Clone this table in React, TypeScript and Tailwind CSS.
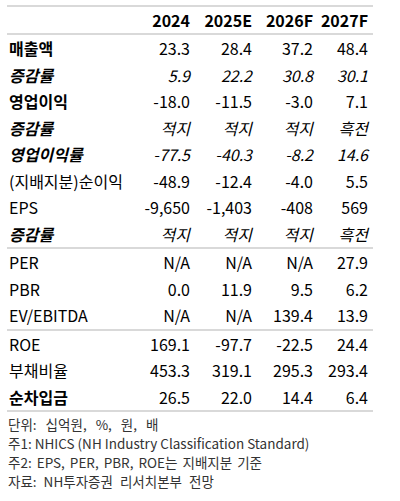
const rows = [
  { label: "매출액", values: ["23.3", "28.4", "37.2", "48.4"], bold: true },
  { label: "증감률", values: ["5.9", "22.2", "30.8", "30.1"], italic: true },
  { label: "영업이익", values: ["-18.0", "-11.5", "-3.0", "7.1"], bold: true },
  { label: "증감률", values: ["적지", "적지", "적지", "흑전"], italic: true },
  { label: "영업이익률", values: ["-77.5", "-40.3", "-8.2", "14.6"], italic: true },
  { label: "(지배지분)순이익", values: ["-48.9", "-12.4", "-4.0", "5.5"] },
  { label: "EPS", values: ["-9,650", "-1,403", "-408", "569"] },
  { label: "증감률", values: ["적지", "적지", "적지", "흑전"], italic: true },
];

const valuation = [
  { label: "PER", values: ["N/A", "N/A", "N/A", "27.9"] },
  { label: "PBR", values: ["0.0", "11.9", "9.5", "6.2"] },
  { label: "EV/EBITDA", values: ["N/A", "N/A", "139.4", "13.9"] },
];

const balance = [
  { label: "ROE", values: ["169.1", "-97.7", "-22.5", "24.4"] },
  { label: "부채비율", values: ["453.3", "319.1", "295.3", "293.4"] },
  { label: "순차입금", values: ["26.5", "22.0", "14.4", "6.4"], bold: true },
];

type Row = { label: string; values: string[]; bold?: boolean; italic?: boolean };

const cols = ["w-[65px]", "w-[62px]", "w-[61px]", "w-[60px] pr-[5px]"];

const TableRow = ({ row }: { row: Row }) => (
  <div className={`flex items-center h-[26.5px] ${row.italic ? "italic" : ""}`}>
    <div className={`w-[118px] pl-[2px] whitespace-nowrap ${row.bold || row.italic ? "font-bold" : ""}`}>
      {row.label}
    </div>
    {row.values.map((v, i) => (
      <div key={i} className={`${cols[i]} text-right`}>
        {v}
      </div>
    ))}
  </div>
);

const Divider = () => <div className="h-[2px] bg-[#d9d9d9]" />;

const App = () => {
  return (
    <div
      className="w-[400px] h-[501px] bg-white text-black pt-[5px] px-[7px]"
      style={{ fontFamily: '"Noto Sans CJK KR", "Noto Sans", sans-serif' }}
    >
      <div className="w-[366px] text-[16px] leading-none">
        <Divider />
        <div className="flex items-center h-[26px] font-bold">
          <div className="w-[118px]" />
          <div className="w-[65px] text-right">2024</div>
          <div className="w-[62px] text-right">2025E</div>
          <div className="w-[61px] text-right">2026F</div>
          <div className="w-[60px] pr-[5px] text-right">2027F</div>
        </div>
        <Divider />
        {rows.map((r, i) => (
          <TableRow key={i} row={r} />
        ))}
        <Divider />
        {valuation.map((r, i) => (
          <TableRow key={i} row={r} />
        ))}
        <Divider />
        {balance.map((r, i) => (
          <TableRow key={i} row={r} />
        ))}
        <Divider />
      </div>
      <div className="mt-[3px] pl-[1px] text-[13.5px] leading-[19px] text-[#333333]">
        <p className="[word-spacing:6px]">단위: 십억원, %, 원, 배</p>
        <p>주1: NHICS (NH Industry Classification Standard)</p>
        <p className="[word-spacing:2px]">주2: EPS, PER, PBR, ROE는 지배지분 기준</p>
        <p className="[word-spacing:4px]">자료: NH투자증권 리서치본부 전망</p>
      </div>
    </div>
  );
};

export default App;
